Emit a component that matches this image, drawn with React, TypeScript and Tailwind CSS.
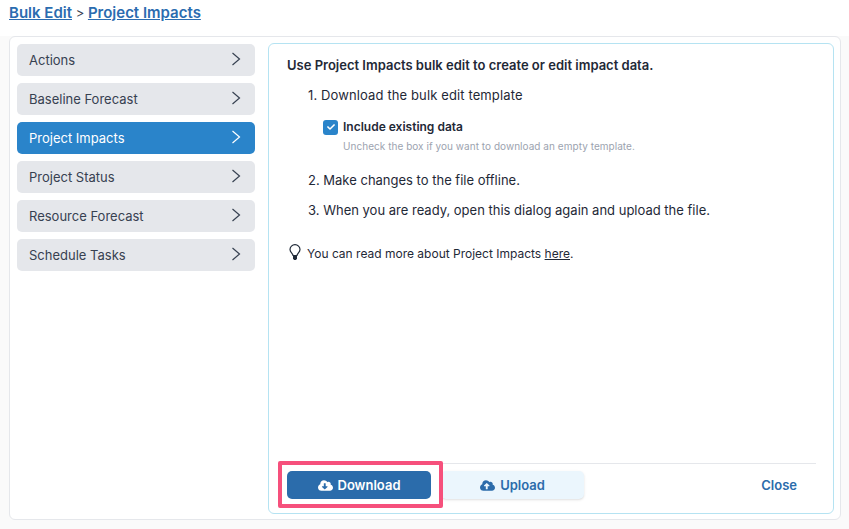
import { FaCheck, FaCloudDownloadAlt, FaCloudUploadAlt } from 'react-icons/fa'

const TABS = ['Actions', 'Baseline Forecast', 'Project Impacts', 'Project Status', 'Resource Forecast', 'Schedule Tasks']

function Chevron() {
  return (
    <svg width="10" height="14" viewBox="0 0 10 14" fill="none" stroke="currentColor" strokeWidth="1.2" className="-mt-[2px]">
      <path d="M1.5 1 L8.5 7 L1.5 13" />
    </svg>
  )
}

function Bulb() {
  return (
    <svg width="12" height="17" viewBox="0 0 12 17" fill="none" className="ml-[2px] -mt-[3px] shrink-0">
      <path
        d="M4 11.5 C4 9.5 1 8.5 1 5.5 A5 4.8 0 0 1 11 5.5 C11 8.5 8 9.5 8 11.5 Z"
        stroke="#1f2937"
        strokeWidth="1.2"
      />
      <path d="M4 12 H8 V14.5 L7 16 H5 L4 14.5 Z" fill="#1f2937" />
    </svg>
  )
}

export default function App() {
  return (
    <div className="w-[849px] h-[529px] overflow-hidden bg-[#fafafa] font-['Inter',sans-serif] text-[#1f2937]">
      <div className="h-[36px] bg-white pl-[9px] pt-[3px] text-[15px] leading-[20px] font-semibold text-[#2b6cb0]">
        <a className="underline">Bulk Edit</a>
        <span className="text-[13px] font-normal text-[#374151]"> &gt; </span>
        <a className="underline">Project Impacts</a>
      </div>

      <div className="ml-[9px] w-[832px] h-[484px] flex gap-[12px] rounded-[6px] border border-[#e5e7eb] bg-white pl-[7px] pr-[6px] pt-[6px] pb-[5px]">
        <div className="w-[239px] pr-px flex flex-col gap-[7px] pt-px">
          {TABS.map((tab) => {
            const active = tab === 'Project Impacts'
            return (
              <div
                key={tab}
                className={`h-[32px] flex items-center justify-between rounded-[5px] pl-[12px] pr-[14px] text-[13px] ${
                  active ? 'bg-[#2a84ca] text-white' : 'bg-[#e5e7eb] text-[#374151]'
                }`}
              >
                <span className="pt-[2px]">{tab}</span>
                <Chevron />
              </div>
            )
          })}
        </div>

        <div className="w-[566px] flex flex-col rounded-[6px] border border-[#b5e3f2] pl-[18px] pr-[17px]">
          <div className="flex-1 pt-[12px] text-[13px] leading-[18px]">
            <p className="font-semibold">Use Project Impacts bulk edit to create or edit impact data.</p>
            <div className="mt-[12px] ml-[21px]">
              <p className="tracking-[0.12px]">1. Download the bulk edit template</p>
              <div className="mt-[14px] ml-[15px] flex items-center gap-[5px]">
                <span className="w-[15px] h-[15px] flex items-center justify-center rounded-[3px] bg-[#2a84ca] text-white">
                  <FaCheck size={8} />
                </span>
                <span className="text-[12px] font-semibold">Include existing data</span>
              </div>
              <p className="mt-[3px] ml-[35px] text-[10px] tracking-[0.04px] leading-[14px] text-[#9ca3af]">
                Uncheck the box if you want to download an empty template.
              </p>
              <p className="mt-[18px]">2. Make changes to the file offline.</p>
              <p className="mt-[12px]">3. When you are ready, open this dialog again and upload the file.</p>
            </div>
            <div className="mt-[26px] flex items-center gap-[6px] text-[12px]">
              <Bulb />
              <span>
                You can read more about Project Impacts <a className="underline">here</a>.
              </span>
            </div>
          </div>

          <div className="h-[50px] pb-[7px] flex items-center border-t border-[#e5e7eb] text-[13px] font-semibold">
            <div className="relative z-10 w-[144px] h-[28px] flex items-center justify-center gap-[5px] rounded-[5px] bg-[#2b6cab] text-white">
              <FaCloudDownloadAlt size={15} />
              <span className="pt-[2px]">Download</span>
              <div className="absolute -left-[9px] -top-[10px] w-[165px] h-[47px] border-[4px] border-[#f6507c] rounded-[2px]" />
            </div>
            <div className="ml-[10px] w-[143px] h-[28px] flex items-center justify-center gap-[5px] rounded-[5px] bg-[#ebf6fd] text-[#2b6cab] shadow-sm">
              <FaCloudUploadAlt size={15} />
              <span className="pt-[2px]">Upload</span>
            </div>
            <span className="ml-auto mr-[19px] pt-[2px] text-[#2b6cab]">Close</span>
          </div>
        </div>
      </div>
    </div>
  )
}
